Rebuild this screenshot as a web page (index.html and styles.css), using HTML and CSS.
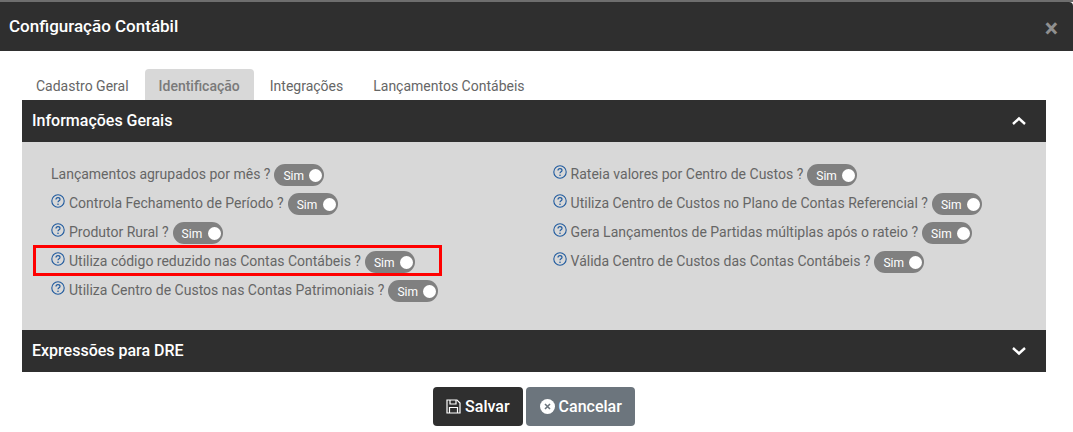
FILE: index.html
```html
<!DOCTYPE html>
<html lang="pt-BR">
  <head>
    <meta charset="UTF-8" />
    <meta name="viewport" content="width=device-width, initial-scale=1.0" />
    <title>Configuração Contábil</title>
    <link rel="stylesheet" href="styles.css">
  </head>
  <body>
    <svg class="sprites" width="0" height="0">
      <symbol id="help" viewBox="0 0 14 14">
        <circle cx="7" cy="7" r="6.2" fill="none" stroke="#1f5a9e" stroke-width="1.1" />
        <path d="M5 5.6c0-1.2.9-1.9 2-1.9s2 .7 2 1.7c0 1.5-2 1.4-2 2.9" fill="none" stroke="#1f5a9e" stroke-width="1.2" />
        <circle cx="7" cy="10.2" r=".8" fill="#1f5a9e" />
      </symbol>
    </svg>

    <div class="modal">
      <div class="modal-header">
        <h1>Configuração Contábil</h1>
        <span class="close">×</span>
      </div>

      <div class="modal-body">
        <ul class="tabs">
          <li>Cadastro Geral</li>
          <li class="active">Identificação</li>
          <li>Integrações</li>
          <li>Lançamentos Contábeis</li>
        </ul>

        <div class="panel-header">
          <h2>Informações Gerais</h2>
          <svg class="chevron" width="16" height="10" viewBox="0 0 16 10"><path d="M2 8l6-5.5L14 8" /></svg>
        </div>
        <div class="panel-body">
          <div class="col">
            <div class="row">
              <span class="label">Lançamentos agrupados por mês ?</span>
              <span class="toggle">Sim<i></i></span>
            </div>
            <div class="row">
              <svg class="help" width="14" height="14"><use href="#help" /></svg>
              <span class="label">Controla Fechamento de Período ?</span>
              <span class="toggle">Sim<i></i></span>
            </div>
            <div class="row">
              <svg class="help" width="14" height="14"><use href="#help" /></svg>
              <span class="label">Produtor Rural ?</span>
              <span class="toggle">Sim<i></i></span>
            </div>
            <div class="row">
              <svg class="help" width="14" height="14"><use href="#help" /></svg>
              <span class="label">Utiliza código reduzido nas Contas Contábeis ?</span>
              <span class="toggle">Sim<i></i></span>
              <div class="highlight"></div>
            </div>
            <div class="row">
              <svg class="help" width="14" height="14"><use href="#help" /></svg>
              <span class="label">Utiliza Centro de Custos nas Contas Patrimoniais ?</span>
              <span class="toggle">Sim<i></i></span>
            </div>
          </div>
          <div class="col">
            <div class="row">
              <svg class="help" width="14" height="14"><use href="#help" /></svg>
              <span class="label">Rateia valores por Centro de Custos ?</span>
              <span class="toggle">Sim<i></i></span>
            </div>
            <div class="row">
              <svg class="help" width="14" height="14"><use href="#help" /></svg>
              <span class="label">Utiliza Centro de Custos no Plano de Contas Referencial ?</span>
              <span class="toggle">Sim<i></i></span>
            </div>
            <div class="row">
              <svg class="help" width="14" height="14"><use href="#help" /></svg>
              <span class="label">Gera Lançamentos de Partidas múltiplas após o rateio ?</span>
              <span class="toggle">Sim<i></i></span>
            </div>
            <div class="row">
              <svg class="help" width="14" height="14"><use href="#help" /></svg>
              <span class="label">Válida Centro de Custos das Contas Contábeis ?</span>
              <span class="toggle">Sim<i></i></span>
            </div>
          </div>
        </div>

        <div class="panel-header">
          <h2>Expressões para DRE</h2>
          <svg class="chevron" width="16" height="10" viewBox="0 0 16 10"><path d="M2 2l6 5.5L14 2" /></svg>
        </div>

        <div class="modal-buttons">
          <button class="btn btn-dark">
            <svg width="15" height="15" viewBox="0 0 15 15" fill="none" stroke="#fff" stroke-width="1.2">
              <path d="M1 1h10l3 3v10H1z" />
              <path d="M4 1v4h6V1M3.5 14V8.5h8V14" />
            </svg>
            Salvar
          </button>
          <button class="btn btn-grey">
            <svg width="15" height="15" viewBox="0 0 15 15">
              <circle cx="7.5" cy="7.5" r="7.5" fill="#fff" />
              <path d="M5 5l5 5M10 5l-5 5" stroke="#6c757d" stroke-width="1.6" />
            </svg>
            Cancelar
          </button>
        </div>
      </div>
    </div>
  </body>
</html>
```

FILE: styles.css
```css
* {
  box-sizing: border-box;
}
body {
  margin: 0;
  background: white;
  font-family: Roboto, Arial, sans-serif;
  font-size: 14px;
  color: #666;
  overflow: hidden;
}
.sprites {
  position: absolute;
}
.modal {
  border-top: 2px solid #6e6e6e;
}
.modal-header {
  height: 49px;
  display: flex;
  align-items: center;
  justify-content: space-between;
  padding: 0 15px 0 9px;
  background: #2f2f2f;
  border-top-right-radius: 4px;
}
.modal-header h1 {
  margin: 0 0 2px;
  font-size: 17px;
  font-weight: 500;
  color: white;
}
.close {
  font-size: 25px;
  font-weight: 700;
  color: #8f8f8f;
  line-height: 1;
  margin-top: 3px;
}
.modal-body {
  padding: 18px 27px 0 22px;
}
.tabs {
  display: flex;
  list-style: none;
  margin: 0;
  padding: 0;
  height: 31px;
}
.tabs li {
  padding: 9px 14px 0;
  line-height: 17px;
  margin-right: 2px;
  border-radius: 4px 4px 0 0;
}
.tabs .active {
  background: #d8d8d8;
  font-weight: 500;
  color: #7a7a7a;
}
.panel-header {
  height: 42px;
  display: flex;
  align-items: center;
  justify-content: space-between;
  padding: 0 19px 0 10px;
  background: #2f2f2f;
}
.panel-header h2 {
  margin: 0 0 2px;
  font-size: 16px;
  font-weight: 500;
  color: white;
}
.chevron path {
  fill: none;
  stroke: white;
  stroke-width: 2.4;
}
.panel-body {
  height: 188px;
  display: grid;
  grid-template-columns: 501.6px 1fr;
  padding: 22px 0 0 29px;
  background: #d8d8d8;
}
.row {
  position: relative;
  height: 29px;
  display: flex;
  align-items: flex-start;
}
.label {
  line-height: 20px;
  margin-right: 4px;
}
.help {
  margin: 1px 4px 0 0;
  flex: none;
}
.toggle {
  position: relative;
  width: 50px;
  height: 22px;
  flex: none;
  padding-left: 9px;
  border-radius: 11px;
  background: #808080;
  color: white;
  font-size: 12px;
  line-height: 24px;
}
.toggle i {
  position: absolute;
  top: 5px;
  right: 2px;
  width: 13px;
  height: 13px;
  border-radius: 50%;
  background: white;
}
.highlight {
  position: absolute;
  top: -6px;
  left: -18px;
  width: 409px;
  height: 31px;
  border: 3px solid #f00;
}
.modal-buttons {
  display: flex;
  justify-content: center;
  gap: 3px;
  margin-top: 15px;
}
.btn {
  display: flex;
  align-items: center;
  gap: 4px;
  height: 39px;
  padding: 0 13.5px;
  border: 0;
  border-radius: 4px;
  color: white;
  font-family: inherit;
  font-size: 16px;
  font-weight: 500;
}
.btn-dark {
  background: #2f2f2f;
}
.btn-grey {
  background: #6c757d;
}
```
